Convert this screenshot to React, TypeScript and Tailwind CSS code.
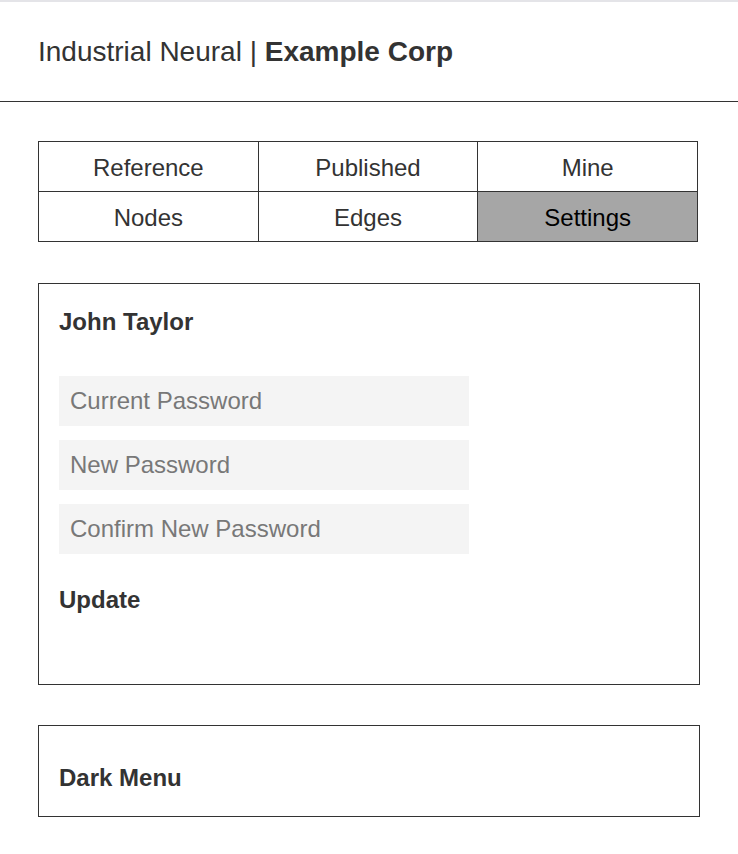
const tabs = ["Reference", "Published", "Mine", "Nodes", "Edges", "Settings"];

export default function App() {
  const active = "Settings";

  return (
    <div className="min-h-screen bg-white [font-family:'Liberation_Sans',Arial,Helvetica,sans-serif] text-[#333]">
      <div className="h-[2px] bg-[#e4e4e8]" />

      {/* Header */}
      <header className="h-[100px] border-b border-[#333] px-[38px] flex items-center">
        <h1 className="text-[28px] leading-none">
          Industrial Neural | <span className="font-bold">Example Corp</span>
        </h1>
      </header>

      <main className="px-[38px] pt-[39px] pb-[37px] flex flex-col">
        {/* Tabs */}
        <div className="w-[660px] grid grid-cols-3 border-l border-t border-[#333]">
          {tabs.map((t) => (
            <button
              key={t}
              className={`h-[50px] border-r border-b border-[#333] text-[24px] leading-none pt-[2px] flex items-center justify-center ${
                t === active ? "bg-[#a6a6a6] text-black" : "bg-white text-[#333]"
              }`}
            >
              {t}
            </button>
          ))}
        </div>

        {/* Account */}
        <section className="mt-[41px] border border-[#333] h-[402px] px-[20px] pt-[26px]">
          <h2 className="text-[24px] font-bold leading-none">John Taylor</h2>
          <div className="mt-[42px] flex flex-col gap-[14px]">
            {["Current Password", "New Password", "Confirm New Password"].map((p) => (
              <input
                key={p}
                type="password"
                placeholder={p}
                className="w-[410px] h-[50px] bg-[#f4f4f4] px-[11px] text-[24px] placeholder-[#787878] outline-none"
              />
            ))}
          </div>
          <button className="mt-[34px] text-[24px] font-bold leading-none">Update</button>
        </section>

        {/* Dark menu */}
        <section className="mt-[40px] border border-[#333] h-[92px] px-[20px] flex items-center">
          <h2 className="text-[24px] font-bold leading-none pt-[14px]">Dark Menu</h2>
        </section>
      </main>
    </div>
  );
}
